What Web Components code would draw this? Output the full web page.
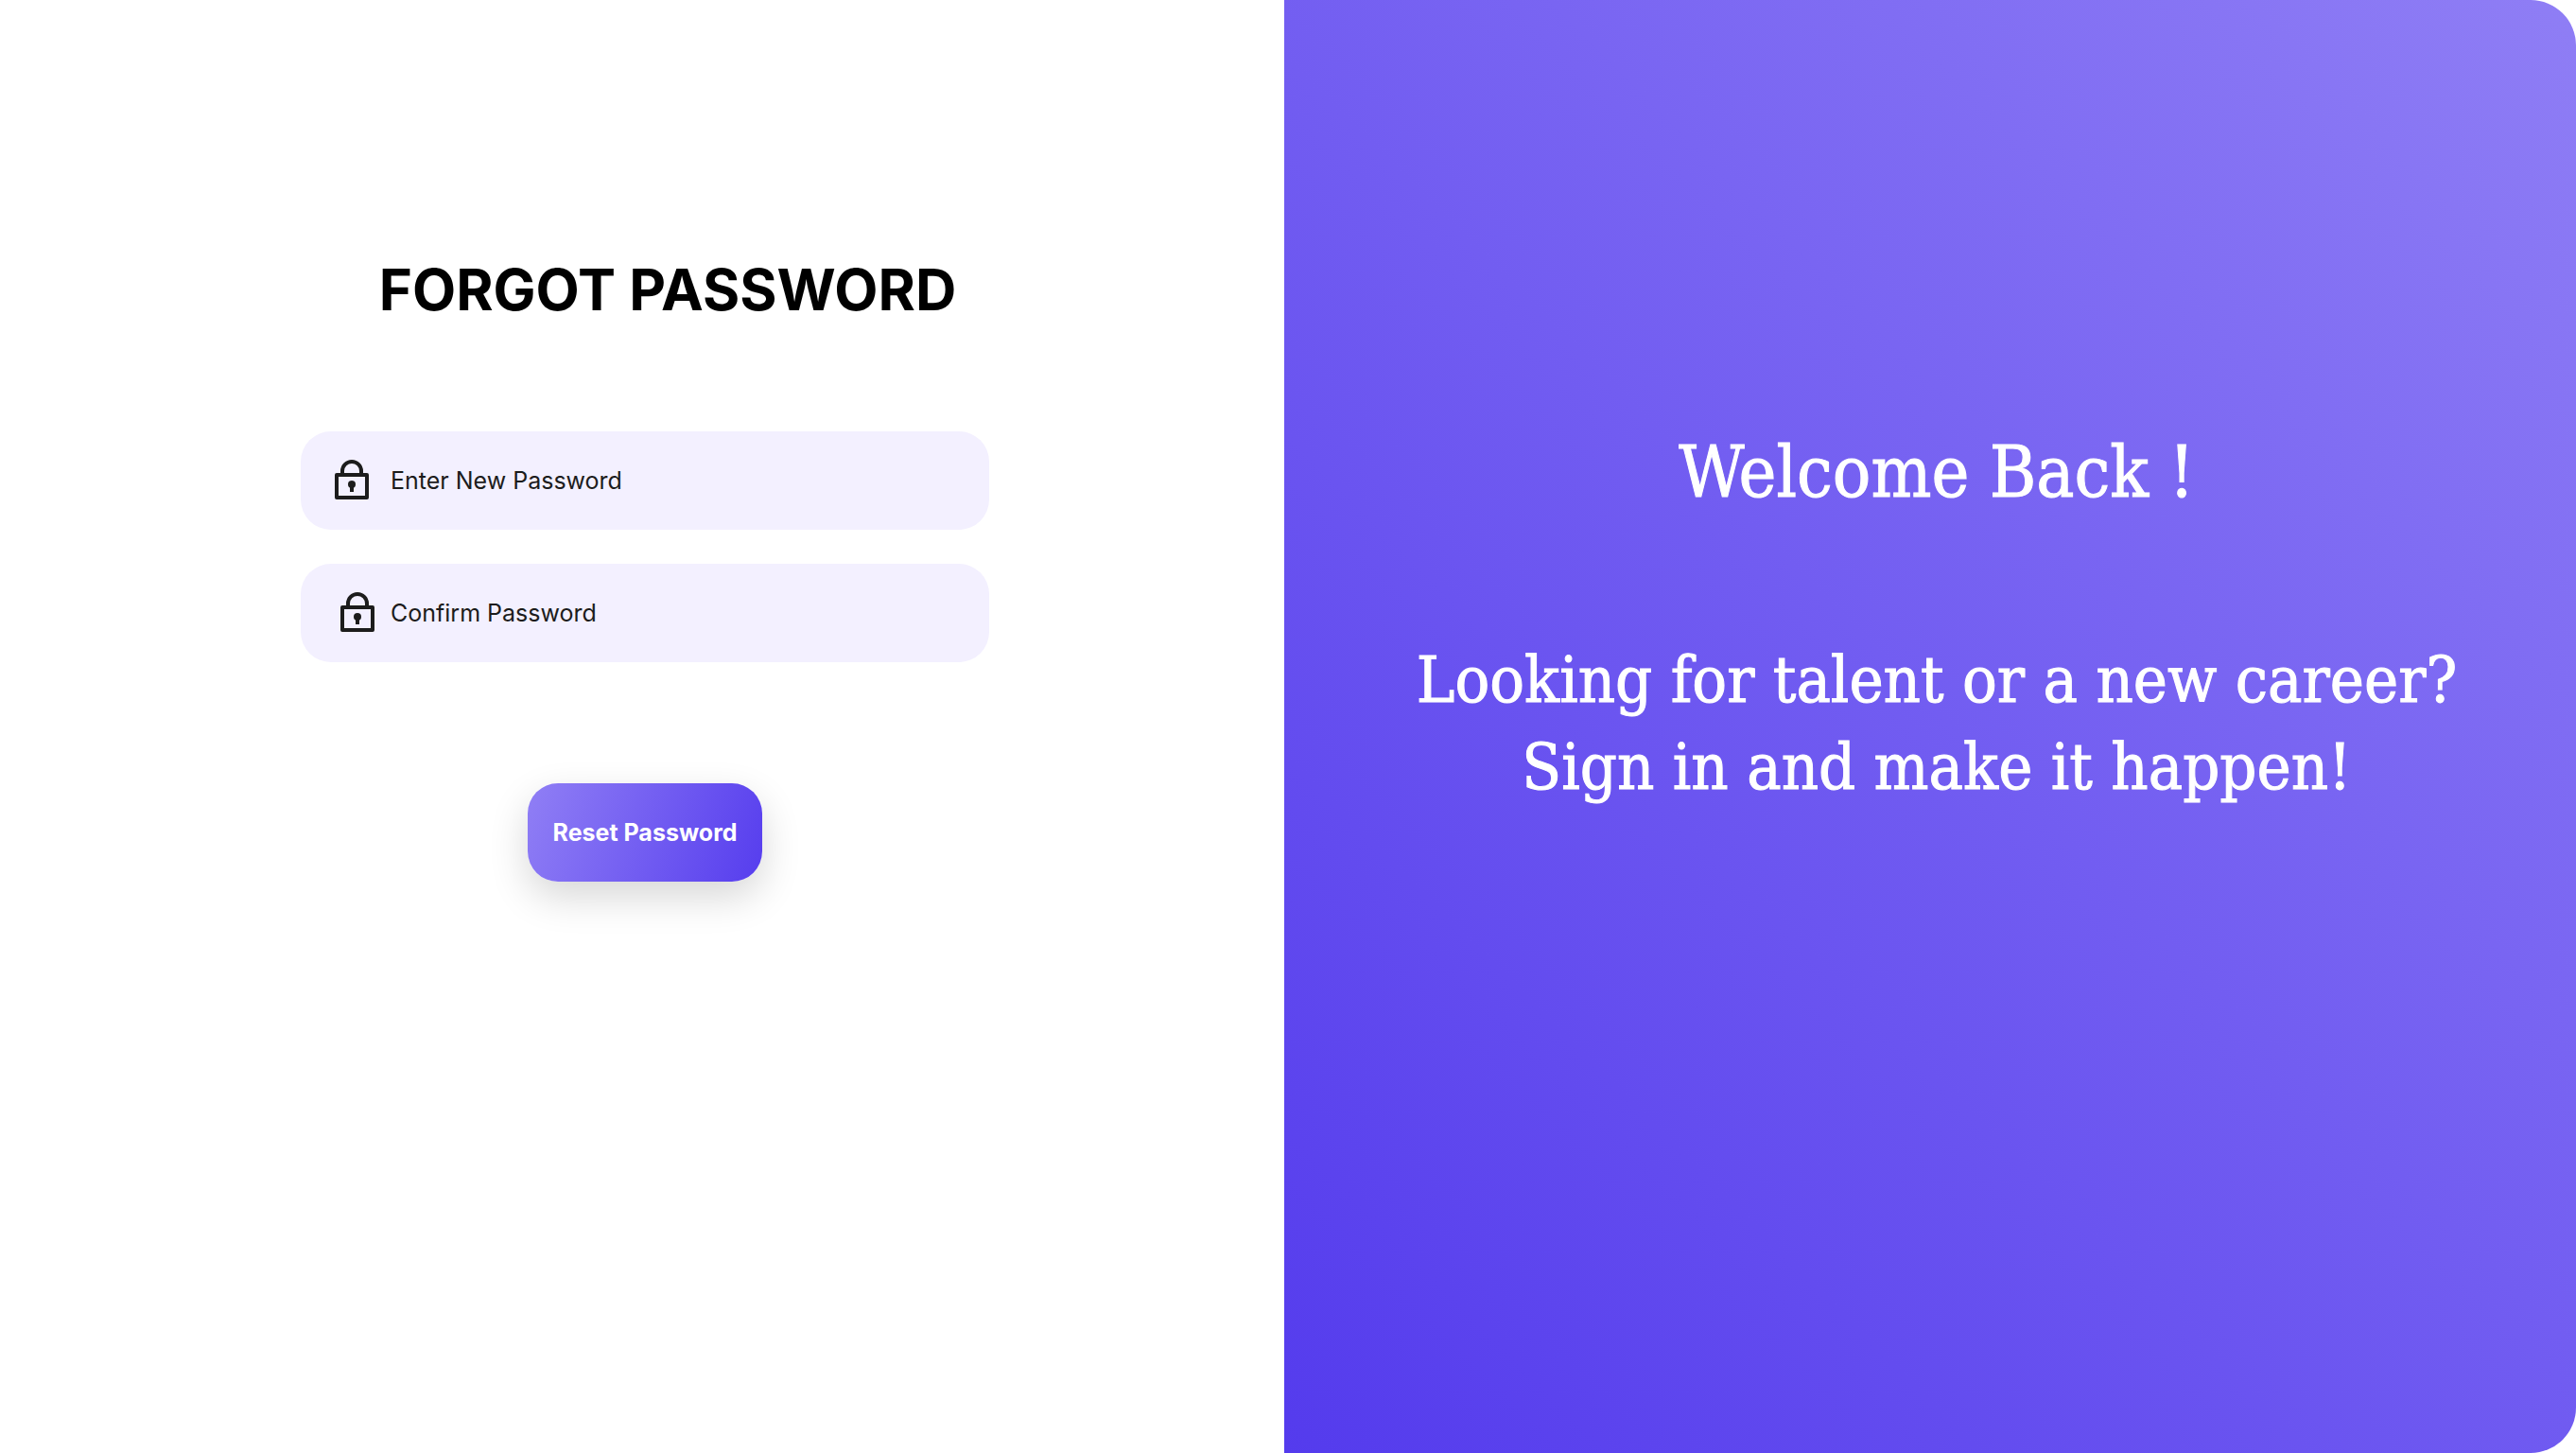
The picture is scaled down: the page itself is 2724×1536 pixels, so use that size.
<!DOCTYPE html>
<html lang="en">
<head>
<meta charset="utf-8">
<meta name="viewport" content="width=device-width, initial-scale=1">
<title>Forgot Password</title>
<style>
  body { margin: 0; background: #fff; font-family: Inter, "Open Sans", sans-serif; }
</style>
</head>
<body>
<reset-page>
  <reset-form slot="form" heading="FORGOT PASSWORD">
    <password-field name="new-password" placeholder="Enter New Password"></password-field>
    <password-field class="indented" name="confirm-password" placeholder="Confirm Password"></password-field>
    <reset-button slot="action">Reset Password</reset-button>
  </reset-form>
  <welcome-panel slot="aside">
    <span slot="title">Welcome Back !</span>
    <span slot="message">Looking for talent or a new career?<br>Sign in and make it happen!</span>
  </welcome-panel>
</reset-page>

<template id="reset-page">
  <style>
    :host { display: grid; grid-template-columns: 1358fr 1366fr; min-height: 100vh; }
    ::slotted(*) { min-width: 0; }
  </style>
  <slot name="form"></slot>
  <slot name="aside"></slot>
</template>

<template id="reset-form">
  <style>
    :host { display: block; box-sizing: border-box; padding: 262px 0 64px 6px; }
    form { display: flex; flex-direction: column; align-items: center; }
    h1 { margin: 0; padding-left: 48px; font-size: 60px; line-height: 88px; font-weight: 700; color: #000; }
    .fields { display: flex; flex-direction: column; gap: 36px; width: 728px; max-width: 100%; margin: 106px 0 128px; }
  </style>
  <form>
    <h1></h1>
    <div class="fields"><slot></slot></div>
    <slot name="action"></slot>
  </form>
</template>

<template id="password-field">
  <style>
    :host { display: block; --inset: 36px; }
    :host(.indented) { --inset: 42px; }
    label { display: flex; align-items: center; height: 104px; border-radius: 32px; background: #f3f0ff; color: #1c1c1c; }
    .icon { box-sizing: border-box; flex: none; width: 95px; padding-left: var(--inset); line-height: 0; }
    svg { width: 36px; height: 44px; }
    input { flex: 1; min-width: 0; height: 100%; padding: 0 32px 0 0; border: 0; outline: 0; background: none; color: inherit; font: 400 25px/36px Inter, "Open Sans", sans-serif; }
    input::placeholder { color: inherit; opacity: 1; }
  </style>
  <label>
    <span class="icon">
      <svg viewBox="0 0 36 44" fill="none" stroke="currentColor" stroke-width="4" stroke-linejoin="round" aria-hidden="true">
        <path d="M8 16v-4a10 10 0 0 1 20 0v4"/>
        <path d="M2 16h32v24H2z"/>
        <path d="M18 26v8"/>
        <circle cx="18" cy="26" r="4" fill="currentColor" stroke="none"/>
      </svg>
    </span>
    <input type="password">
  </label>
</template>

<template id="reset-button">
  <style>
    :host { display: block; }
    button { display: block; width: 248px; height: 104px; padding: 0; border: 0; border-radius: 32px; background: linear-gradient(110deg, #907ff5, #563dee); box-shadow: 0 16px 42px rgba(0, 0, 0, .16); color: #fff; font: 700 25px/36px Inter, "Open Sans", sans-serif; cursor: pointer; }
  </style>
  <button type="button"><slot></slot></button>
</template>

<template id="welcome-panel">
  <style>
    :host { display: flex; flex-direction: column; align-items: center; gap: 128px; box-sizing: border-box; padding: 453px 0 64px 14px; border-radius: 0 48px 48px 0; background: linear-gradient(45deg, #543bed, #8f7ef5); color: #fff; text-align: center; font-family: "DejaVu Serif Condensed", "DejaVu Serif", serif; -webkit-text-stroke: 1px currentColor; }
    h2, p { margin: 0; font-weight: 400; line-height: 92px; }
    h2 { font-size: 75px; }
    p { font-size: 68px; }
  </style>
  <h2><slot name="title"></slot></h2>
  <p><slot name="message"></slot></p>
</template>

<script>
  class TemplateElement extends HTMLElement {
    constructor() {
      super();
      const template = document.getElementById(this.localName);
      this.attachShadow({ mode: 'open' }).append(template.content.cloneNode(true));
    }
  }

  customElements.define('reset-page', class extends TemplateElement {});
  customElements.define('reset-button', class extends TemplateElement {});
  customElements.define('welcome-panel', class extends TemplateElement {});

  customElements.define('reset-form', class extends TemplateElement {
    connectedCallback() {
      this.shadowRoot.querySelector('h1').textContent = this.getAttribute('heading');
    }
  });

  customElements.define('password-field', class extends TemplateElement {
    connectedCallback() {
      const input = this.shadowRoot.querySelector('input');
      input.name = this.getAttribute('name');
      input.placeholder = this.getAttribute('placeholder');
      input.setAttribute('aria-label', input.placeholder);
    }
  });
</script>
</body>
</html>
